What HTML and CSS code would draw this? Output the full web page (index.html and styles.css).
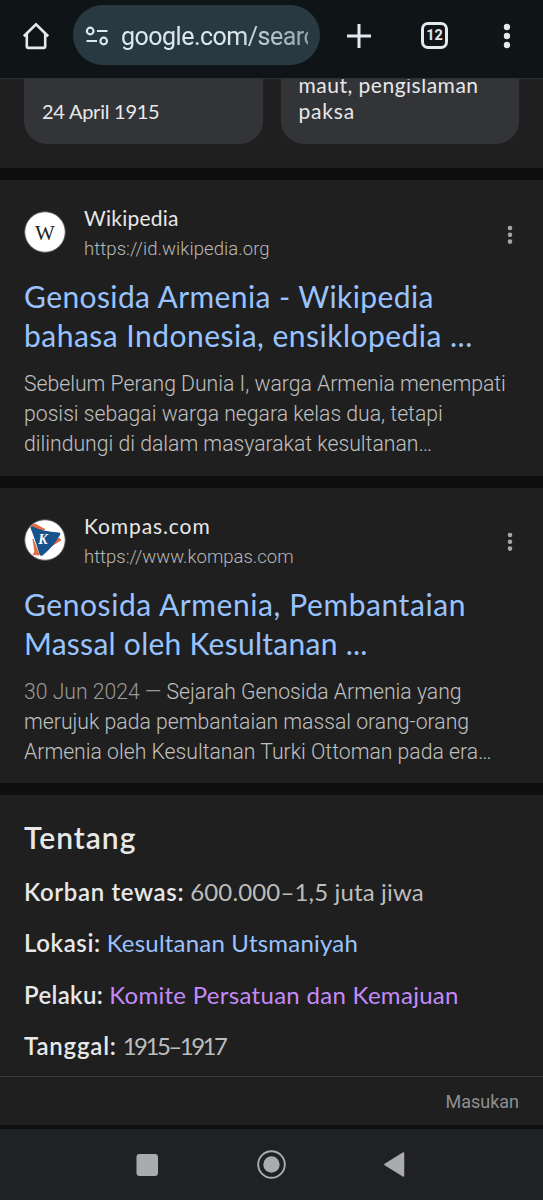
FILE: index.html
```html
<!DOCTYPE html>
<html lang="id">
<head>
<meta charset="utf-8">
<title>Genosida Armenia</title>
<link rel="stylesheet" href="styles.css">
</head>
<body>
<header class="toolbar">
  <svg class="home" width="28" height="28" viewBox="0 0 28 28"><path d="M1.800 14.200 14 2.200l12.200 12M4.800 11.500v12.800q0 1.600 1.600 1.600h15.200q1.600 0 1.600-1.600V11.500" fill="none" stroke="#e3e9ed" stroke-width="2.600"/></svg>
  <div class="omnibox">
    <svg width="24" height="20" viewBox="0 0 24 20" fill="none" stroke="#dce7ee" stroke-width="2.200"><circle cx="5.200" cy="5" r="3.300"/><path d="M12 5h10.500M1.500 15h10.500"/><circle cx="18.700" cy="15" r="3.300"/></svg>
    <span class="address">google.com/search</span>
  </div>
  <svg class="plus" width="26" height="26" viewBox="0 0 26 26"><path d="M13 1v24M1 13h24" stroke="#e3e9ed" stroke-width="3"/></svg>
  <span class="tabs">12</span>
  <svg class="menu" width="8" height="26" viewBox="0 0 8 26" fill="#e3e9ed"><circle cx="4" cy="4" r="3.200"/><circle cx="4" cy="13" r="3.200"/><circle cx="4" cy="22" r="3.200"/></svg>
</header>
<main>
  <section class="facts">
    <div class="fact"><span class="f1">24 April 1915</span></div>
    <div class="fact"><span class="f2">maut, pengislaman</span><span class="f3">paksa</span></div>
  </section>
  <article class="result">
    <div class="source">
      <svg class="favicon" width="42" height="42" viewBox="0 0 42 42"><circle cx="21" cy="21" r="20.300" fill="#fff" stroke="#55575a"/><text x="21" y="28.500" text-anchor="middle" class="wiki">W</text></svg>
      <div class="site"><span class="name n1">Wikipedia</span><span class="url u1">https://id.wikipedia.org</span></div>
      <svg class="more" width="6" height="20" viewBox="0 0 6 20" fill="#a5a5a5"><circle cx="3" cy="3" r="2.300"/><circle cx="3" cy="9.800" r="2.300"/><circle cx="3" cy="16.600" r="2.300"/></svg>
    </div>
    <h3><span class="t1">Genosida Armenia - Wikipedia</span><span class="t2">bahasa Indonesia, ensiklopedia ...</span></h3>
    <p><span>Sebelum Perang Dunia I, warga Armenia menempati</span><span>posisi sebagai warga negara kelas dua, tetapi</span><span>dilindungi di dalam masyarakat kesultanan…</span></p>
  </article>
  <article class="result">
    <div class="source">
      <svg class="favicon" width="42" height="42" viewBox="0 0 42 42"><circle cx="21" cy="21" r="20.300" fill="#fff" stroke="#55575a"/><path d="M7.500 6.500 11 5l10 5.500-12 2zM35 19l2 2-11 7zM9 20l2 13-2 2.500 6 .5z" fill="#e36a42" stroke="#e36a42" stroke-linejoin="round"/><path d="M6.500 9q-.5-2 2-1.500 10 5 26.500 6 2 .5 1 2.500Q30 27 18.500 36.500q-2 1-3-1Q11 20 6.500 9z" fill="#16528c"/><text x="19" y="25" text-anchor="middle" class="kompas">K</text></svg>
      <div class="site"><span class="name n2">Kompas.com</span><span class="url">https://www.kompas.com</span></div>
      <svg class="more" width="6" height="20" viewBox="0 0 6 20" fill="#a5a5a5"><circle cx="3" cy="3" r="2.300"/><circle cx="3" cy="9.800" r="2.300"/><circle cx="3" cy="16.600" r="2.300"/></svg>
    </div>
    <h3><span class="t3">Genosida Armenia, Pembantaian</span><span class="t4">Massal oleh Kesultanan ...</span></h3>
    <p><span><time>30 Jun 2024 — </time>Sejarah Genosida Armenia yang</span><span>merujuk pada pembantaian massal orang-orang</span><span>Armenia oleh Kesultanan Turki Ottoman pada era…</span></p>
  </article>
  <section class="about">
    <h2>Tentang</h2>
    <div class="row"><b class="b1">Korban tewas:</b><span class="v1">600.000–1,5 juta jiwa</span></div>
    <div class="row"><b class="b2">Lokasi:</b><span class="v2 link">Kesultanan Utsmaniyah</span></div>
    <div class="row"><b class="b3">Pelaku:</b><span class="v3 visited">Komite Persatuan dan Kemajuan</span></div>
    <div class="row"><b class="b4">Tanggal:</b><span class="v4">1915–1917</span></div>
  </section>
  <footer class="feedback">Masukan</footer>
</main>
<nav class="system">
  <svg width="543" height="71" viewBox="0 0 543 71" fill="#aaabac"><rect x="136.500" y="25" width="21.500" height="22" rx="3"/><circle cx="271.500" cy="35.500" r="13.300" fill="none" stroke="#aaabac" stroke-width="1.900"/><circle cx="271.500" cy="35.500" r="8.200"/><path d="M385 35.500 403.500 24v23z" stroke="#aaabac" stroke-width="1.500" stroke-linejoin="round"/></svg>
</nav>
</body>
</html>
```
FILE: styles.css
```css
* { box-sizing: border-box; }
body { margin: 0; width: 543px; height: 1200px; overflow: hidden; background: #0f0f0f; color: #e8e8e8; font-family: Lato, "Liberation Sans", sans-serif; display: flex; flex-direction: column; }
span { white-space: nowrap; }
svg { display: block; flex: none; }
.toolbar { height: 79px; flex: none; display: flex; align-items: center; padding: 0 0 7px 22px; background: #0f1517; border-bottom: 1px solid #2b3033; }
.omnibox { width: 247px; height: 60px; margin: 0 0 1px 23px; padding: 0 12px; border-radius: 30px; background: #283941; display: flex; align-items: center; gap: 12px; }
.address { width: 188px; padding-top: 4px; overflow: hidden; color: #dce7ee; font: 25px/36px Roboto, sans-serif; letter-spacing: -.5px; -webkit-mask-image: linear-gradient(to right, #000 60%, rgba(0,0,0,.6)); mask-image: linear-gradient(to right, #000 60%, rgba(0,0,0,.6)); }
.plus { margin-left: 26px; }
.tabs { width: 27px; height: 27px; margin-left: 49px; border: 3px solid #e3e9ed; border-radius: 7px; color: #e3e9ed; font: 700 14.5px/21px Roboto, sans-serif; text-align: center; }
.menu { margin-left: 55px; }
.omnibox > svg { margin-top: 1px; }
.facts { height: 89px; padding: 0 24px; display: flex; gap: 18px; background: #1f1f1f; }
.fact { flex: 1; height: 65px; overflow: hidden; padding: 0 18px 20px; border-radius: 0 0 23px 23px; background: #333438; font-size: 21px; line-height: 26px; display: flex; flex-direction: column; justify-content: flex-end; }
.f1 { font-size: 20px; letter-spacing: -.25px; }
.f2 { letter-spacing: .5px; }
.f3 { letter-spacing: .8px; }
.result { background: #1f1f1f; margin-top: 12px; padding: 24px 24px 0; height: 295.5px; }
.source { display: flex; height: 56px; }
.favicon { margin-top: 7px; }
.wiki { font: 21px "Liberation Serif", serif; fill: #222; }
.kompas { font: italic bold 14px "Liberation Serif", serif; fill: #fff; }
.site { display: flex; flex-direction: column; margin-left: 18px; flex: 1; }
.name { font-size: 21px; line-height: 28px; height: 28px; }
.n1 { letter-spacing: .25px; }
.n2 { letter-spacing: .9px; }
.url { margin-top: 2px; font: 300 18.5px/30px Roboto, sans-serif; color: #b8b8b8; }
.u1 { letter-spacing: .08px; }
.more { margin: 20.5px 6px 0 0; }
h3 { margin: 17px 0 0; font-size: 30px; font-weight: 400; line-height: 39px; color: #99c3ff; }
h3 span, p span { display: block; width: max-content; }
.t1 { letter-spacing: .4px; }
.t2 { letter-spacing: .48px; }
.t3 { letter-spacing: .57px; }
.t4 { letter-spacing: .27px; }
p { margin: 14px 0 0; font: 300 21.2px/30px Roboto, sans-serif; color: #c0c0c0; }
time { color: #9a9a9a; }
.about { background: #1f1f1f; margin-top: 12px; height: 281px; padding: 23px 24px 0; }
h2 { margin: 0 0 10px; width: max-content; font-size: 30px; font-weight: 600; line-height: 38px; letter-spacing: 1px; }
.row { display: flex; gap: 6px; height: 51.3px; font-size: 24px; line-height: 51px; color: #bdbdbd; }
.row b { font-weight: 600; color: #e8e8e8; white-space: nowrap; }
.b1 { letter-spacing: .65px; }
.b2 { letter-spacing: .6px; }
.b3 { letter-spacing: .35px; }
.b4 { letter-spacing: .8px; }
.v1 { letter-spacing: .15px; }
.v2 { letter-spacing: .2px; }
.v3 { letter-spacing: .3px; }
.v4 { letter-spacing: -2.5px; }
.row .link { color: #99c3ff; }
.row .visited { color: #c58af9; }
.feedback { height: 49px; background: #1f1f1f; border-top: 1px solid #3a3b3d; padding-right: 24px; text-align: right; color: #8f8f8f; font: 18px/49px Roboto, sans-serif; }
.system { margin-top: auto; height: 71px; background: #202124; }
```
